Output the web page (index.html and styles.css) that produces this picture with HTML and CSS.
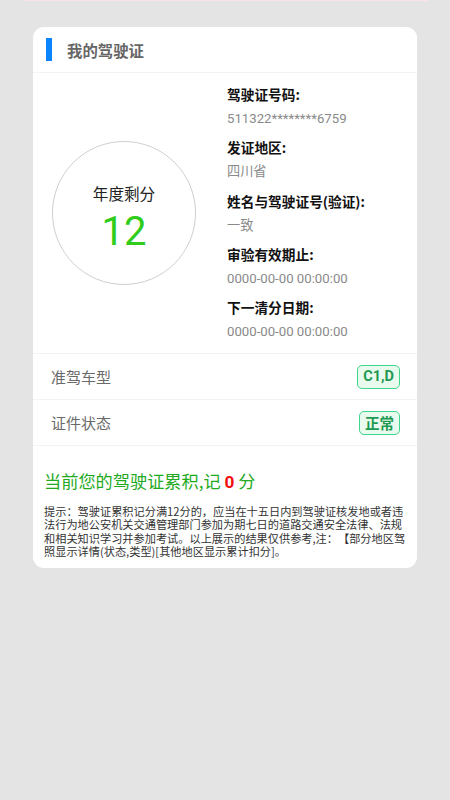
FILE: index.html
```html
<!DOCTYPE html>
<html lang="zh-CN">
<head>
<meta charset="utf-8">
<title>我的驾驶证</title>
<link rel="stylesheet" href="styles.css">
</head>
<body>
<div class="top-stripe"></div>
<div class="card">
  <div class="card-header">
    <span class="bar"></span>
    <span class="title">我的驾驶证</span>
  </div>
  <div class="main">
    <div class="left">
      <div class="circle">
        <div class="circle-label">年度剩分</div>
        <div class="circle-num">12</div>
      </div>
    </div>
    <div class="right">
      <div class="item">
        <div class="label">驾驶证号码:</div>
        <div class="value">511322********6759</div>
      </div>
      <div class="item">
        <div class="label">发证地区:</div>
        <div class="value">四川省</div>
      </div>
      <div class="item">
        <div class="label">姓名与驾驶证号(验证):</div>
        <div class="value">一致</div>
      </div>
      <div class="item">
        <div class="label">审验有效期止:</div>
        <div class="value">0000-00-00 00:00:00</div>
      </div>
      <div class="item">
        <div class="label">下一清分日期:</div>
        <div class="value">0000-00-00 00:00:00</div>
      </div>
    </div>
  </div>
  <div class="row">
    <span class="row-label">准驾车型</span>
    <span class="badge">C1,D</span>
  </div>
  <div class="row">
    <span class="row-label">证件状态</span>
    <span class="badge">正常</span>
  </div>
  <div class="summary">
    <div class="summary-title">当前您的驾驶证累积,记 <span class="zero">0</span> 分</div>
    <div class="tip">提示：驾驶证累积记分满12分的，应当在十五日内到驾驶证核发地或者违法行为地公安机关交通管理部门参加为期七日的道路交通安全法律、法规和相关知识学习并参加考试。以上展示的结果仅供参考,注：【部分地区驾照显示详情(状态,类型)[其他地区显示累计扣分]。</div>
  </div>
</div>
</body>
</html>
```

FILE: styles.css
```css
html, body {
  margin: 0;
  padding: 0;
}
body {
  background: #e4e4e4;
  width: 450px;
  height: 800px;
  font-family: Roboto, "Noto Sans CJK SC", sans-serif;
  overflow: hidden;
}
.top-stripe {
  height: 1px;
  margin: 0 22px;
  background: #f9e3e7;
}
.card {
  margin: 26px 33px 0;
  background: #fff;
  border-radius: 11px;
  overflow: hidden;
}
.card-header {
  height: 45px;
  display: flex;
  align-items: center;
  padding-left: 13px;
  border-bottom: 1px solid #f3f3f3;
}
.bar {
  width: 6px;
  height: 23px;
  background: #0a84ff;
  margin-right: 15px;
}
.title {
  font-family: "Noto Sans CJK SC", sans-serif;
  font-size: 15.4px;
  font-weight: bold;
  color: #666;
}
.main {
  display: flex;
  align-items: center;
  border-bottom: 1px solid #f3f3f3;
}
.left {
  width: 182px;
  display: flex;
  justify-content: center;
}
.circle {
  box-sizing: border-box;
  width: 144px;
  height: 144px;
  padding-top: 9px;
  border: 1px solid #cfcfcf;
  border-radius: 50%;
  display: flex;
  flex-direction: column;
  align-items: center;
  justify-content: center;
}
.circle-label {
  font-family: "Noto Sans CJK SC", sans-serif;
  font-size: 15.6px;
  color: #222;
  line-height: 20px;
}
.circle-num {
  font-family: Roboto, sans-serif;
  font-size: 40px;
  color: #2fcc1a;
  line-height: 40px;
  margin-top: 9px;
}
.right {
  flex: 1;
  padding: 11px 0 11px 12px;
  display: flex;
  flex-direction: column;
  gap: 8.3px;
}
.item {
  display: flex;
  flex-direction: column;
  gap: 5px;
}
.label {
  font-family: "Noto Sans CJK SC", sans-serif;
  font-size: 13.7px;
  font-weight: bold;
  color: #111;
  line-height: 20px;
}
.value {
  font-family: Roboto, "Noto Sans CJK SC", sans-serif;
  font-size: 13.2px;
  color: #8a8a8a;
  line-height: 20px;
}
.row {
  height: 45px;
  display: flex;
  align-items: center;
  justify-content: space-between;
  padding: 0 17px 0 18px;
  border-bottom: 1px solid #f3f3f3;
}
.row-label {
  font-family: "Noto Sans CJK SC", sans-serif;
  font-size: 15px;
  color: #6a6a6a;
}
.badge {
  height: 22px;
  padding: 0 5px;
  display: flex;
  align-items: center;
  border: 1.5px solid #3dd68c;
  border-radius: 5px;
  background: #e8fbee;
  color: #1e9a50;
  font-family: Roboto, "Noto Sans CJK SC", sans-serif;
  font-size: 14.5px;
  font-weight: bold;
}
.summary {
  padding: 23px 11px 10px 11px;
}
.summary-title {
  font-family: "Noto Sans CJK SC", sans-serif;
  font-size: 17.2px;
  line-height: 24px;
  color: #1faa1f;
}
.zero {
  font-family: Roboto, sans-serif;
  color: #f20c0c;
  font-weight: bold;
}
.tip {
  margin-top: 11px;
  font-family: "Noto Sans CJK SC", sans-serif;
  font-size: 11.2px;
  line-height: 13.3px;
  color: #333;
  text-spacing-trim: space-all;
}
```
